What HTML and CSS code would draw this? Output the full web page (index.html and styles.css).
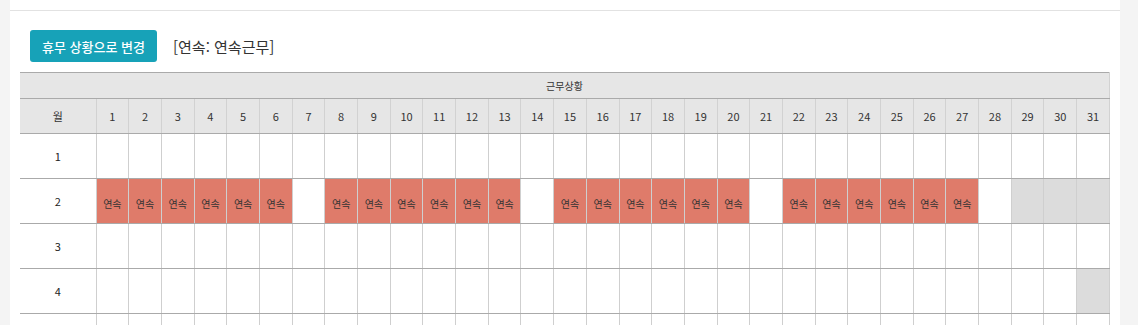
FILE: index.html
```html
<!DOCTYPE html>
<html lang="ko">
<head>
<meta charset="utf-8">
<link rel="stylesheet" href="styles.css">
</head>
<body>
<div class="panel">
  <div class="panel-top"></div>
  <div class="panel-body">
    <div class="toolbar">
      <button class="btn-change">휴무 상황으로 변경</button>
      <span class="legend">[연속: 연속근무]</span>
    </div>
    <table class="grid">
      <colgroup>
        <col class="c-month">
        <col span="31">
      </colgroup>
      <thead>
        <tr class="h1"><th colspan="32">근무상황</th></tr>
        <tr class="h2">
          <th>월</th><th>1</th><th>2</th><th>3</th><th>4</th><th>5</th><th>6</th><th>7</th><th>8</th><th>9</th><th>10</th><th>11</th><th>12</th><th>13</th><th>14</th><th>15</th><th>16</th><th>17</th><th>18</th><th>19</th><th>20</th><th>21</th><th>22</th><th>23</th><th>24</th><th>25</th><th>26</th><th>27</th><th>28</th><th>29</th><th>30</th><th>31</th>
        </tr>
      </thead>
      <tbody>
        <tr><td class="m">1</td><td></td><td></td><td></td><td></td><td></td><td></td><td></td><td></td><td></td><td></td><td></td><td></td><td></td><td></td><td></td><td></td><td></td><td></td><td></td><td></td><td></td><td></td><td></td><td></td><td></td><td></td><td></td><td></td><td></td><td></td><td></td></tr>
        <tr><td class="m">2</td><td class="on">연속</td><td class="on">연속</td><td class="on">연속</td><td class="on">연속</td><td class="on">연속</td><td class="on">연속</td><td></td><td class="on">연속</td><td class="on">연속</td><td class="on">연속</td><td class="on">연속</td><td class="on">연속</td><td class="on">연속</td><td></td><td class="on">연속</td><td class="on">연속</td><td class="on">연속</td><td class="on">연속</td><td class="on">연속</td><td class="on">연속</td><td></td><td class="on">연속</td><td class="on">연속</td><td class="on">연속</td><td class="on">연속</td><td class="on">연속</td><td class="on">연속</td><td></td><td class="off"></td><td class="off"></td><td class="off"></td></tr>
        <tr><td class="m">3</td><td></td><td></td><td></td><td></td><td></td><td></td><td></td><td></td><td></td><td></td><td></td><td></td><td></td><td></td><td></td><td></td><td></td><td></td><td></td><td></td><td></td><td></td><td></td><td></td><td></td><td></td><td></td><td></td><td></td><td></td><td></td></tr>
        <tr><td class="m">4</td><td></td><td></td><td></td><td></td><td></td><td></td><td></td><td></td><td></td><td></td><td></td><td></td><td></td><td></td><td></td><td></td><td></td><td></td><td></td><td></td><td></td><td></td><td></td><td></td><td></td><td></td><td></td><td></td><td></td><td></td><td class="off"></td></tr>
        <tr><td class="m">5</td><td></td><td></td><td></td><td></td><td></td><td></td><td></td><td></td><td></td><td></td><td></td><td></td><td></td><td></td><td></td><td></td><td></td><td></td><td></td><td></td><td></td><td></td><td></td><td></td><td></td><td></td><td></td><td></td><td></td><td></td><td></td></tr>
      </tbody>
    </table>
  </div>
</div>
</body>
</html>
```

FILE: styles.css
```css
html, body {
  margin: 0;
  padding: 0;
}
body {
  background: #f4f4f4;
  font-family: "Noto Sans CJK KR", "Noto Sans", sans-serif;
  color: #333;
}
.panel {
  margin-left: 10px;
  width: 1110px;
  background: #fff;
  min-height: 325px;
}
.panel-top {
  height: 10px;
  border-bottom: 1px solid #e2e2e2;
}
.panel-body {
  padding: 19px 10px 0 10px;
}
.toolbar {
  display: flex;
  align-items: center;
  gap: 16px;
  padding-left: 10px;
  margin-bottom: 10px;
}
.btn-change {
  height: 32px;
  width: 127px;
  padding: 0;
  border: none;
  border-radius: 3px;
  background: #17a2b8;
  color: #fff;
  font-family: inherit;
  font-size: 13px;
  font-weight: 500;
}
.legend {
  font-size: 15px;
  color: #333;
}
.grid {
  width: 1090px;
  border-collapse: collapse;
  table-layout: fixed;
  font-size: 10px;
}
.c-month {
  width: 76px;
}
.grid th {
  background: #e6e6e6;
  font-weight: 400;
  color: #333;
  border-left: 1px solid #d2d2d2;
  border-right: 1px solid #d2d2d2;
  padding: 0;
}
.grid th:first-child { border-left: none; }
.grid tr.h1 th {
  height: 25px;
  border-top: 1px solid #aaa;
  border-bottom: 1px solid #aaa;
  font-size: 10px;
}
.grid tr.h2 th {
  height: 34px;
  border-bottom: 1px solid #aaa;
  font-size: 11px;
}
.grid td {
  height: 44px;
  padding: 0;
  text-align: center;
  border-left: 1px solid #cfcfcf;
  border-right: 1px solid #cfcfcf;
  border-bottom: 1px solid #aaa;
  font-size: 10px;
  color: #333;
}
.grid td.m {
  border-left: none;
  font-size: 11px;
  color: #222;
}
.grid td.on {
  background: #df7b6a;
  padding-top: 4px;
  height: 40px;
  color: #333;
}
.grid td.off {
  background: #dcdcdc;
}
```
